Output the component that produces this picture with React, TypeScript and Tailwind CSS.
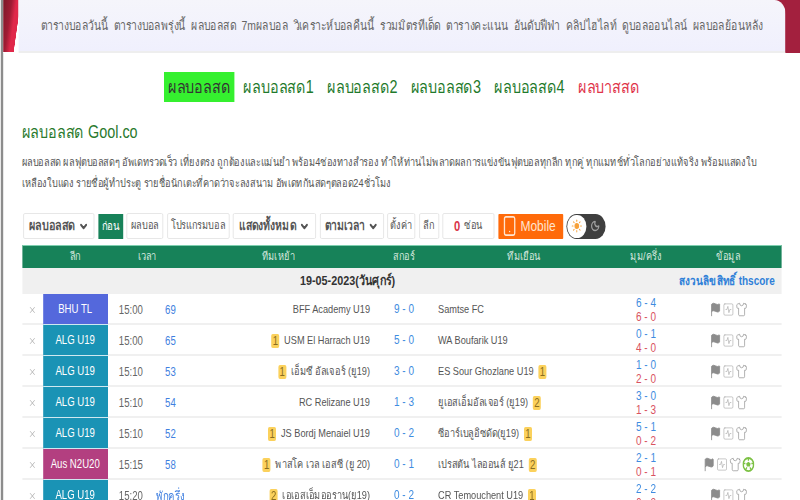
import { Flag, SquareActivity, Shirt, Smartphone, Sun, Moon, ChevronDown, X } from "lucide-react";

const topLinks = ["ตารางบอลวันนี้", "ตารางบอลพรุ่งนี้", "ผลบอลสด", "7mผลบอล", "วิเคราะห์บอลคืนนี้", "รวมมิตรทีเด็ด", "ตารางคะแนน", "อันดับฟีฟ่า", "คลิปไฮไลท์", "ดูบอลออนไลน์", "ผลบอลย้อนหลัง"];

const navLinks = ["ผลบอลสด1", "ผลบอลสด2", "ผลบอลสด3", "ผลบอลสด4"];

type Match = {
  league: string;
  color: string;
  time: string;
  status: string;
  home: string;
  homeBadge?: string;
  score: string;
  away: string;
  awayBadge?: string;
  corner: string;
  half: string;
  ball?: boolean;
};

const matches: Match[] = [
  { league: "BHU TL", color: "bg-[#5468dc]", time: "15:00", status: "69", home: "BFF Academy U19", score: "9 - 0", away: "Samtse FC", corner: "6 - 4", half: "6 - 0" },
  { league: "ALG U19", color: "bg-[#1a93b5]", time: "15:00", status: "65", home: "USM El Harrach U19", homeBadge: "1", score: "5 - 0", away: "WA Boufarik U19", corner: "0 - 1", half: "4 - 0" },
  { league: "ALG U19", color: "bg-[#1a93b5]", time: "15:10", status: "53", home: "เอ็มซี อัลเจอร์ (ยู19)", homeBadge: "1", score: "3 - 0", away: "ES Sour Ghozlane U19", awayBadge: "1", corner: "1 - 0", half: "2 - 0" },
  { league: "ALG U19", color: "bg-[#1a93b5]", time: "15:10", status: "54", home: "RC Relizane U19", score: "1 - 3", away: "ยูเอสเอ็มอัลเจอร์ (ยู19)", awayBadge: "2", corner: "3 - 0", half: "1 - 3" },
  { league: "ALG U19", color: "bg-[#1a93b5]", time: "15:10", status: "52", home: "JS Bordj Menaiel U19", homeBadge: "1", score: "0 - 2", away: "ซีอาร์เบลูอิซดัด(ยู19)", awayBadge: "1", corner: "5 - 1", half: "0 - 2" },
  { league: "Aus N2U20", color: "bg-[#b33f80]", time: "15:15", status: "58", home: "พาสโค เวล เอสซี (ยู 20)", homeBadge: "1", score: "0 - 1", away: "เปรสตัน ไลออนส์ ยู21", awayBadge: "2", corner: "2 - 1", half: "0 - 1", ball: true },
  { league: "ALG U19", color: "bg-[#1a93b5]", time: "15:20", status: "พักครึ่ง", home: "เอเอสเอ็มออราน(ยู19)", homeBadge: "2", score: "0 - 2", away: "CR Temouchent U19", awayBadge: "1", corner: "2 - 2", half: "0 - 2" },
];

function Badge({ n }: { n: string }) {
  return <span className="w-[10px] h-[14px] shrink-0 rounded-[2px] bg-[#fbd15c] text-[#8a6d1f] text-[12px] leading-[14px] text-center">{n}</span>;
}

function Btn({ children, className = "" }: { children: React.ReactNode; className?: string }) {
  return (
    <div className={`h-[26px] flex items-center justify-center whitespace-nowrap rounded-[2px] border border-[#e4e4e4] bg-white text-[#555] ${className}`}>
      {children}
    </div>
  );
}

function Ball() {
  return (
    <svg viewBox="0 0 16 16" className="w-[15px] h-[15px]">
      <circle cx="8" cy="8" r="7" fill="#fff" stroke="#7cc144" strokeWidth="2" />
      <path d="M8 5l3 2-1 3H6L5 7z" fill="#7cc144" />
      <path d="M8 1v3M15 7l-3 0M1 7l3 0M4 14l2-3M12 14l-2-3" stroke="#7cc144" strokeWidth="1.6" />
    </svg>
  );
}

export default function App() {
  return (
    <div className="w-[800px] h-[500px] overflow-hidden">
      {/* The source page is squeezed sideways, so everything is laid out 1000 wide and scaled */}
      <div className="w-[1000px] h-[500px] origin-top-left scale-x-[0.8] bg-white font-['Liberation_Sans','Noto_Sans',sans-serif]">
        <div className="ml-[1px] h-[500px] border-l-[3px] border-[#8c8c8c]">
          <div className="flex h-[53px] bg-[linear-gradient(90deg,#ffffff_50%,#a3203e_50%)]">
            <div className="w-[19px] h-[52px] bg-[linear-gradient(100deg,#7a1828_0%,#a01c34_38%,#e0284a_60%,#e0284a_78%,#ffffff_80%)]" />
            <div className="w-[959px] rounded-tr-[14px] border-b-2 border-[#eeeeee] bg-gradient-to-b from-[#f5f5fb] to-[#f0f0fd] flex items-center justify-center gap-[7px] whitespace-nowrap text-[13px] text-[#666]">
              {topLinks.map((t) => (
                <span key={t}>{t}</span>
              ))}
            </div>
            <div className="w-[18px] h-[52px] bg-[#a3203e]" />
          </div>

          {/* Main nav */}
          <div className="flex justify-center items-center gap-[16.5px] h-[30px] mt-[19px] text-[18px] text-[#1f7a2c] whitespace-nowrap">
            <span className="bg-[#35f02f] px-[5px] -mr-[5px] h-[30px] leading-[30px] text-[#333]">ผลบอลสด</span>
            {navLinks.map((t) => (
              <span key={t}>{t}</span>
            ))}
            <span className="text-[#e0344a]">ผลบาสสด</span>
          </div>

          <div className="mt-[18px] ml-[23px] text-[18px] leading-[24px] text-[#2a7a2e]">ผลบอลสด Gool.co</div>

          <p className="mt-[8px] ml-[23px] whitespace-nowrap text-[11.5px] leading-[21px] text-[#555]">
            ผลบอลสด ผลฟุตบอลสดๆ อัพเดทรวดเร็ว เที่ยงตรง ถูกต้องและแม่นยำ พร้อม4ช่องทางสำรอง ทำให้ท่านไม่พลาดผลการแข่งขันฟุตบอลทุกลีก ทุกคู่ ทุกแมทช์ทั่วโลกอย่างแท้จริง พร้อมแสดงใบ
            <br />
            เหลืองใบแดง รายชื่อผู้ทำประตู รายชื่อนักเตะที่คาดว่าจะลงสนาม อัพเดทกันสดๆตลอด24ชั่วโมง
          </p>

          {/* Toolbar */}
          <div className="flex items-center gap-[4.5px] mt-[19px] ml-[25px] h-[26px]">
            <Btn className="w-[89px] gap-[4px] font-bold text-[13.5px]">ผลบอลสด <ChevronDown className="w-[13px] h-[13px]" strokeWidth={4} /></Btn>
            <div className="w-[31px] h-[25px] bg-[#178259] text-white text-[12px] flex items-center justify-center">ก่อน</div>
            <Btn className="w-[46px] text-[11.5px]">ผลบอล</Btn>
            <Btn className="w-[78px] text-[11.5px]">โปรแกรมบอล</Btn>
            <Btn className="w-[104px] gap-[4px] font-bold text-[13px]">แสดงทั้งหมด <ChevronDown className="w-[13px] h-[13px]" strokeWidth={4} /></Btn>
            <Btn className="w-[80px] gap-[4px] font-bold text-[13px]">ตามเวลา <ChevronDown className="w-[13px] h-[13px]" strokeWidth={4} /></Btn>
            <Btn className="w-[35px] text-[11.5px]">ตั้งค่า</Btn>
            <Btn className="w-[25px] text-[11.5px]">ลีก</Btn>
            <Btn className="w-[65px] gap-[5px] text-[11.5px]"><b className="text-[#d9374b] text-[14px]">0</b> ซ่อน</Btn>
            <div className="w-[81px] h-[25px] rounded-[1px] bg-[#ff6a0a] text-[#ffe4cf] text-[15px] flex items-center gap-[3px] pl-[3px]">
              <Smartphone className="w-[22px] h-[22px]" strokeWidth={1.8} />
              Mobile
            </div>
            <div className="w-[49px] h-[25px] rounded-full bg-[#3f3f3f] flex items-center justify-between pl-[1px] pr-[7px]">
              <span className="w-[24px] h-[23px] rounded-full bg-white flex items-center justify-center">
                <Sun className="w-[14px] h-[14px] text-[#f7a13a] fill-[#f7a13a]" />
              </span>
              <Moon className="w-[12px] h-[12px] text-[#a0a0a0]" strokeWidth={3} />
            </div>
          </div>

          {/* Table */}
          <div className="mt-[6px] ml-[23.5px] w-[949px] text-[11.5px] text-[#555]">
            <div className="grid grid-cols-[26px_81px_59px_39px_230px_85px_215px_90px_124px] h-[23px] items-center bg-[#178259] border-t border-[#7fcfb0] text-center text-[#d5e8df] text-[11.5px]">
              <span />
              <span>ลีก</span>
              <span className="col-span-2">เวลา</span>
              <span>ทีมเหย้า</span>
              <span>สกอร์</span>
              <span>ทีมเยือน</span>
              <span>มุม/ครึ่ง</span>
              <span className="pr-[8px]">ข้อมูล</span>
            </div>
            <div className="relative h-[26px] bg-[#f0f0f0] flex items-center justify-center pr-[135px] font-bold text-[13.5px] text-[#333]">
              19-05-2023(วันศุกร์)
              <span className="absolute right-[8px] text-[12.5px] text-[#2f80d8]">สงวนลิขสิทธิ์ thscore</span>
            </div>
            {matches.map((m, i) => (
              <div key={i} className="grid grid-cols-[26px_81px_59px_39px_230px_85px_215px_90px_124px] h-[31px] items-center border-b-2 border-[#f0f0f0]">
                <X className="w-[11px] h-[10px] text-[#aaa] justify-self-center" />
                <div className={`${m.color} h-[31px] flex items-center justify-center border-b border-[#cfe8f0] text-white text-[12px]`}>{m.league}</div>
                <span className="pl-[14px] text-[#666] text-[12px]">{m.time}</span>
                <span className="text-center whitespace-nowrap text-[12px] text-[#3f7fe0]">{m.status}</span>
                <div className="flex justify-end items-center gap-[6px] min-w-0 whitespace-nowrap">
                  {m.homeBadge && <Badge n={m.homeBadge} />}
                  <span>{m.home}</span>
                </div>
                <span className="text-center text-[12.5px] text-[#3f8ce0]">{m.score}</span>
                <div className="flex items-center gap-[6px] whitespace-nowrap">
                  <span>{m.away}</span>
                  {m.awayBadge && <Badge n={m.awayBadge} />}
                </div>
                <div className="flex flex-col items-center text-[12.5px] leading-[14px]">
                  <span className="text-[#3f8ce0]">{m.corner}</span>
                  <span className="text-[#d9535f]">{m.half}</span>
                </div>
                <div className="flex items-center justify-center gap-[1px] pr-[8px] text-[#8c8c8c]">
                  <Flag className="w-[15px] h-[15px] fill-[#8c8c8c]" strokeWidth={1.5} />
                  <SquareActivity className="w-[15px] h-[15px] text-[#a8a8a8]" strokeWidth={1.1} />
                  <Shirt className="w-[16px] h-[15px]" strokeWidth={1.2} />
                  {m.ball && <Ball />}
                </div>
              </div>
            ))}
          </div>
        </div>
      </div>
    </div>
  );
}
